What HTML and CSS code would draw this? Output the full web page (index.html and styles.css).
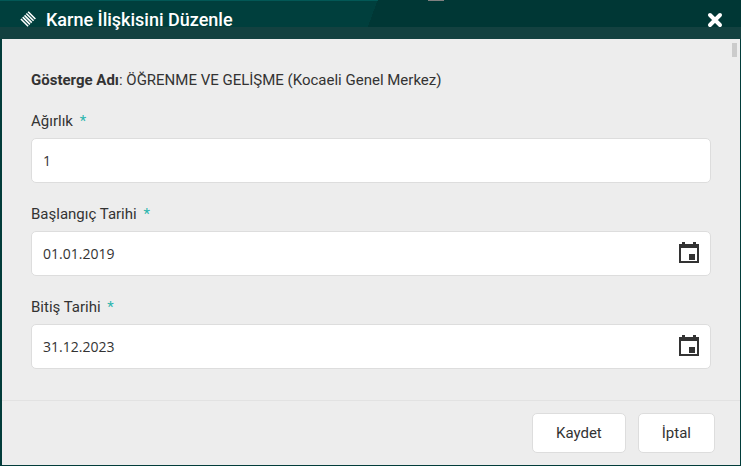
FILE: index.html
```html
<!DOCTYPE html>
<html lang="tr">
<head>
    <meta charset="UTF-8">
    <meta name="viewport" content="width=device-width, initial-scale=1.0">
    <title>Karne İlişkisini Düzenle</title>
    <link rel="stylesheet" href="styles.css">
</head>
<body>

    <form class="dialog">
        <header class="dialog-header">
            <svg class="logo" viewBox="0 0 16 16" aria-hidden="true">
                <path d="M8.6 .7l6.8 6.8M6.9 2.4l6.8 6.8M5.2 4.1l6.8 6.8M3.5 5.8l6.8 6.8M1.8 7.5l6.8 6.8" stroke="#fff" stroke-width="1.5" fill="none"/>
            </svg>
            <h1 class="dialog-title">Karne İlişkisini Düzenle</h1>
            <button type="button" class="close" aria-label="Kapat">
                <svg viewBox="0 0 16 16" aria-hidden="true">
                    <path d="M3 3l10 10M13 3L3 13" stroke="#fff" stroke-width="4" stroke-linecap="round"/>
                </svg>
            </button>
        </header>

        <div class="dialog-body">
            <span class="scroll-thumb"></span>
            <p class="indicator"><strong>Gösterge Adı</strong>: ÖĞRENME VE GELİŞME (Kocaeli Genel Merkez)</p>

            <div class="field">
                <label for="weight">Ağırlık <span class="required">*</span></label>
                <input type="text" id="weight" name="weight" value="1">
            </div>

            <div class="field">
                <label for="startDate">Başlangıç Tarihi <span class="required">*</span></label>
                <div class="date-box">
                    <input type="text" id="startDate" name="startDate" value="01.01.2019">
                    <button type="button" class="calendar" aria-label="Başlangıç tarihi seç">
                        <svg viewBox="0 0 22 22" aria-hidden="true">
                            <path d="M1 2h3V0h3v2h8V0h3v2h3v19H1zM3 6v13h16V6zM11 12h6v6h-6z" fill="#333" fill-rule="evenodd"/>
                        </svg>
                    </button>
                </div>
            </div>

            <div class="field">
                <label for="endDate">Bitiş Tarihi <span class="required">*</span></label>
                <div class="date-box">
                    <input type="text" id="endDate" name="endDate" value="31.12.2023">
                    <button type="button" class="calendar" aria-label="Bitiş tarihi seç">
                        <svg viewBox="0 0 22 22" aria-hidden="true">
                            <path d="M1 2h3V0h3v2h8V0h3v2h3v19H1zM3 6v13h16V6zM11 12h6v6h-6z" fill="#333" fill-rule="evenodd"/>
                        </svg>
                    </button>
                </div>
            </div>
        </div>

        <footer class="dialog-footer">
            <button type="submit" class="btn">Kaydet</button>
            <button type="button" class="btn">İptal</button>
        </footer>
    </form>

</body>
</html>
```

FILE: styles.css
```css
* {
    box-sizing: border-box;
}

body {
    margin: 0;
    background-color: #023c3a;
    color: #333;
    font-family: Roboto, sans-serif;
    font-size: 15px;
    line-height: 20px;
}

.dialog {
    display: flex;
    flex-direction: column;
    min-height: 100vh;
    padding: 0 1px 1px 2px;
}

/* Header */
.dialog-header {
    display: flex;
    align-items: center;
    height: 39px;
    margin: 0 -1px 0 -2px;
    padding: 0 18px 0 19px;
    background:
        linear-gradient(#025856, #025856) 0 0 / 51% 1px no-repeat,
        linear-gradient(#808080, #808080) 59% 0 / 16px 1px no-repeat,
        linear-gradient(#134140, #134140) 0 27px / 100% 12px no-repeat,
        linear-gradient(110deg, #003f3d 50%, #003735 50%);
}

.logo {
    width: 17px;
    height: 17px;
}

.dialog-title {
    flex: 1;
    margin: 0 0 0 10px;
    color: #fff;
    font-size: 18px;
    font-weight: 500;
}

.close {
    width: 16px;
    height: 16px;
    padding: 0;
    border: none;
    background: none;
    cursor: pointer;
}

.close svg,
.calendar svg {
    display: block;
}

/* Content */
.dialog-body {
    position: relative;
    flex: 1;
    padding: 31px 29px 30px;
    background-color: #ededed;
}

.scroll-thumb {
    position: absolute;
    top: 4px;
    right: 3px;
    width: 5px;
    height: 14px;
    background-color: #cbcbcb;
}

.indicator {
    margin: 0;
}

.field {
    margin-top: 21px;
}

label {
    display: block;
    margin-bottom: 7px;
}

.required {
    margin-left: 3px;
    color: #2bb5ad;
}

input {
    display: block;
    width: 100%;
    height: 45px;
    padding: 0 11px;
    border: 1px solid #ddd;
    border-radius: 5px;
    background-color: #fff;
    color: #333;
    font-family: "Open Sans", sans-serif;
    font-size: 14px;
}

.date-box {
    position: relative;
}

.calendar {
    position: absolute;
    top: 11px;
    right: 11px;
    width: 22px;
    height: 22px;
    padding: 0;
    border: none;
    background: none;
    cursor: pointer;
}

/* Footer */
.dialog-footer {
    display: flex;
    justify-content: flex-end;
    gap: 12px;
    padding: 12px 25px;
    border-top: 1px solid #e2e2e2;
    background-color: #ededed;
}

.btn {
    height: 40px;
    padding: 0 23px;
    border: 1px solid #ddd;
    border-radius: 5px;
    background-color: #fff;
    color: #333;
    font-family: inherit;
    font-size: 15px;
    cursor: pointer;
}
```
